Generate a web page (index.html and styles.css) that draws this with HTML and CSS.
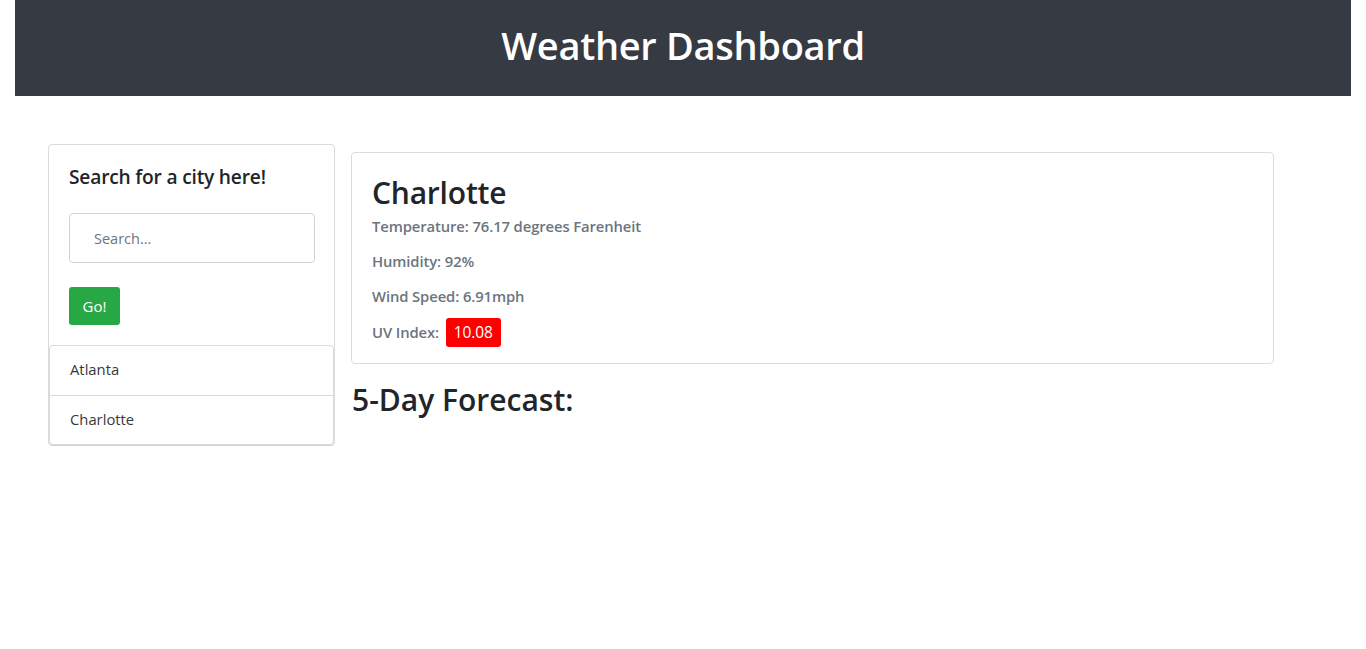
FILE: index.html
```html
<!DOCTYPE html>
<html lang="en">
<head>
<meta charset="utf-8">
<title>Weather Dashboard</title>
<link rel="stylesheet" href="styles.css">
</head>
<body>
<header class="site-header">
  <h1 class="site-title">Weather Dashboard</h1>
</header>
<main class="layout">
  <aside class="search-card">
    <div class="search-body">
      <h5 class="search-title">Search for a city here!</h5>
      <input class="search-input" type="text" placeholder="Search...">
      <button class="go-btn" type="button">Go!</button>
    </div>
    <ul class="city-list">
      <li class="city-item">Atlanta</li>
      <li class="city-item">Charlotte</li>
    </ul>
  </aside>
  <section class="content">
    <div class="current-card">
      <h2 class="city-name">Charlotte</h2>
      <p class="stat">Temperature: 76.17 degrees Farenheit</p>
      <p class="stat">Humidity: 92%</p>
      <p class="stat">Wind Speed: 6.91mph</p>
      <p class="stat stat-uv">UV Index: <span class="uv-badge">10.08</span></p>
    </div>
    <h2 class="forecast-title">5-Day Forecast:</h2>
  </section>
</main>
</body>
</html>
```
FILE: styles.css
```css
* { box-sizing: border-box; }
html, body { margin: 0; padding: 0; }
body {
  font-family: "Open Sans", "Noto Sans", sans-serif;
  color: #212529;
  background: #fff;
  font-size: 16px;
}
.site-header {
  margin: 0 15px;
  height: 96px;
  background: #363a42;
  display: flex;
  align-items: center;
  justify-content: center;
  padding-bottom: 6px;
}
.site-title {
  margin: 0;
  color: #fff;
  font-size: 38px;
  font-weight: 600;
  letter-spacing: -0.3px;
}
.layout {
  display: flex;
  align-items: flex-start;
  gap: 16px;
  padding: 48px 0 0 48px;
}
.search-card {
  width: 287px;
  border: 1px solid #dcdcdc;
  border-radius: 4px;
  background: #fff;
}
.search-body {
  padding: 18px 20px 20px 20px;
  display: flex;
  flex-direction: column;
  align-items: flex-start;
}
.search-title {
  margin: 0 0 22px 0;
  font-size: 19.2px;
  font-weight: 600;
  line-height: 28px;
  letter-spacing: -0.2px;
}
.search-input {
  width: 246px;
  height: 50px;
  border: 1px solid #ced4da;
  border-radius: 4px;
  padding: 0 24px;
  font-family: inherit;
  font-size: 14.5px;
  color: #495057;
  margin-bottom: 24px;
}
.search-input::placeholder { color: #6c757d; }
.go-btn {
  height: 38px;
  width: 51px;
  background: #28a745;
  color: #fff;
  border: none;
  border-radius: 3px;
  font-family: inherit;
  font-size: 15px;
  padding: 0;
}
.city-list {
  list-style: none;
  margin: 0;
  padding: 0;
  border: 1px solid #dadada;
  border-radius: 4px;
  box-shadow: 0 1px 1px rgba(0,0,0,0.06);
}
.city-item {
  height: 49px;
  display: flex;
  align-items: center;
  padding: 0 20px 3px 20px;
  font-size: 14.8px;
  color: #343a40;
}
.city-item + .city-item { border-top: 1px solid #dadada; }
.content {
  padding-top: 8px;
  width: 923px;
}
.current-card {
  border: 1px solid #dcdcdc;
  border-radius: 4px;
  padding: 20px 20px 16px 20px;
}
.city-name {
  margin: 0 0 3px 0;
  font-size: 30px;
  font-weight: 600;
  line-height: 40px;
  letter-spacing: -0.2px;
}
.stat {
  margin: 0 0 14px 0;
  font-size: 14.8px;
  font-weight: 600;
  color: #6c757d;
  line-height: 21px;
  letter-spacing: -0.1px;
}
.stat-uv {
  margin: -3px 0 0 0;
  line-height: 29px;
}
.uv-badge {
  display: inline-block;
  background: #ff0000;
  color: #fff;
  font-weight: 400;
  font-size: 15.5px;
  border-radius: 3px;
  padding: 0 8px;
  line-height: 29px;
  margin-left: 3px;
  vertical-align: top;
}
.forecast-title {
  margin: 16px 0 0 1px;
  font-size: 30px;
  font-weight: 600;
  line-height: 40px;
  letter-spacing: 0;
}
```
